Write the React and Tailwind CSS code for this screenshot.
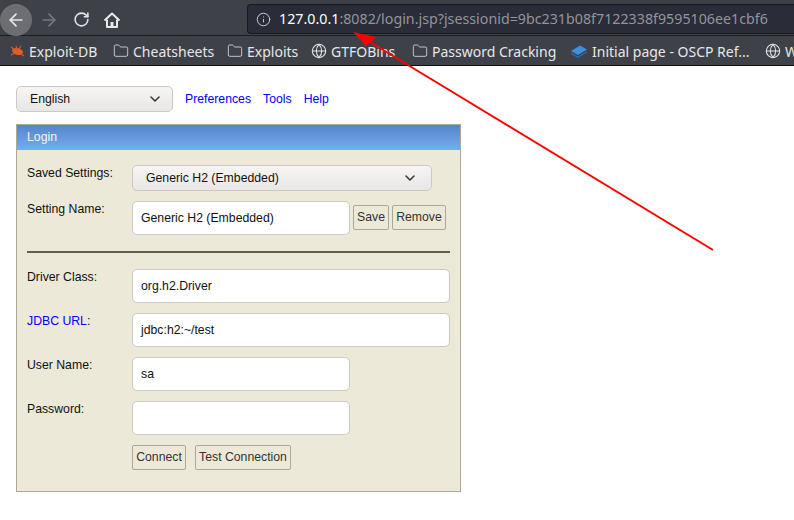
import React from "react";
import { ArrowLeft, ArrowRight, RotateCw, Info, ChevronDown, Folder, Globe } from "lucide-react";

const HomeIcon = () => (
  <svg width="18" height="18" viewBox="0 0 18 18" fill="none" stroke="#e8e9ec" strokeWidth="2" strokeLinejoin="round">
    <path d="M1.5 9.5 9 2.5l7.5 7" />
    <path d="M4 8.5v7.5h10V8.5" />
    <path d="M9 11v5" strokeWidth="3" />
  </svg>
);

const Bug = () => (
  <svg width="16" height="14" viewBox="0 0 16 14" className="shrink-0">
    <ellipse cx="8.5" cy="7.5" rx="5.5" ry="3.4" fill="#e0602c" transform="rotate(12 8.5 7.5)" />
    <path d="M2 3l4 3M2 11l4-2M7 2l1 3M12 2l-2 3M15 12l-3-2" stroke="#d9592a" strokeWidth="1.1" />
  </svg>
);

const BookIcon = () => (
  <svg width="18" height="14" viewBox="0 0 18 14" className="shrink-0">
    <path d="M1 7 10 1.5l7 4-9 5.5z" fill="#3d8fe0" />
    <path d="M1 8.5 8 12.5l9-5.500v1.500L8 14 1 10z" fill="#2a6cb8" />
  </svg>
);

const Bookmark = ({ icon, label, labelClass = "" }) => (
  <div className="flex items-center gap-[4px] shrink-0">
    {icon}
    <span className={labelClass}>{label}</span>
  </div>
);

const FolderIcon = () => <Folder size={16} strokeWidth={1.3} color="#d5d6da" className="shrink-0" />;
const GlobeIcon = () => <Globe size={16} strokeWidth={1.6} color="#e4e5e8" className="shrink-0" />;

const Select = ({ value, className = "" }) => (
  <div className={`flex items-center justify-between h-[26px] rounded-[5px] border border-[#cdc9c2] bg-gradient-to-b from-[#f6f5f4] to-[#e9e7e5] text-[12.25px] text-[#111] ${className}`}>
    <span>{value}</span>
    <ChevronDown size={16} strokeWidth={2.4} color="#3a3a3a" />
  </div>
);

const TextInput = ({ value, className = "" }) => (
  <div className={`flex items-center h-[34px] pl-2 rounded-[5px] border border-[#cdc9c2] bg-white text-[12.25px] text-[#111] ${className}`}>
    {value}
  </div>
);

const FormButton = ({ children, className = "" }) => (
  <div className={`flex items-center justify-center h-[25px] pb-[1px] rounded-[2px] border border-[#aca899] text-[12.25px] text-[#333] ${className}`}>
    {children}
  </div>
);

const Row = ({ label, labelClass = "text-[#111]", children, className = "" }) => (
  <div className={`flex ${className}`}>
    <div className={`w-[105px] shrink-0 text-[12.25px] leading-[14px] pt-[1px] ${labelClass}`}>{label}</div>
    {children}
  </div>
);

const App = () => {
  return (
    <div className="relative w-[794px] h-[520px] overflow-hidden bg-white font-['Liberation_Sans',sans-serif]">
      <div className="h-[66px] bg-[#3f4148] border-b border-[#0e0e10] font-['Noto_Sans',sans-serif] overflow-hidden">
        <div className="flex items-center h-[36px] border-b border-[#1d1e22]">
          <div className="flex items-center justify-center w-[32px] h-[32px] mt-[4px] rounded-full bg-[#6d6e73]">
            <ArrowLeft size={20} strokeWidth={2} color="#e8e8ea" />
          </div>
          <div className="flex items-center justify-center w-[33px] mt-[4px]">
            <ArrowRight size={20} strokeWidth={2} color="#75777c" />
          </div>
          <div className="flex items-center justify-center w-[32px] mt-[4px]">
            <RotateCw size={17} strokeWidth={2.2} color="#e4e5e8" />
          </div>
          <div className="flex items-center justify-center w-[30px] mt-[4px]">
            <HomeIcon />
          </div>
          <div className="flex items-center ml-[120px] flex-1 h-[30px] mt-[3px] pl-[8px] rounded-l-[4px] bg-[#2a2c37] border border-r-0 border-[#17181c] text-[14.25px] whitespace-nowrap overflow-hidden">
            <Info size={15} strokeWidth={1.6} color="#c9cacd" />
            <span className="ml-[8px] text-white">127.0.0.1</span>
            <span className="text-[#93959c]">:8082/login.jsp?jsessionid=9bc231b08f7122338f9595106ee1cbf6</span>
          </div>
        </div>
        <div className="flex items-center h-[29px] pl-[9px] pt-[1px] gap-[13px] text-[14px] text-[#e6e7ea] whitespace-nowrap">
          <Bookmark icon={<Bug />} label="Exploit-DB" labelClass="w-[71px]" />
          <Bookmark icon={<FolderIcon />} label="Cheatsheets" labelClass="w-[81px]" />
          <Bookmark icon={<FolderIcon />} label="Exploits" labelClass="w-[51px]" />
          <Bookmark icon={<GlobeIcon />} label="GTFOBins" labelClass="w-[68px]" />
          <Bookmark icon={<FolderIcon />} label="Password Cracking" labelClass="w-[125px]" />
          <Bookmark icon={<BookIcon />} label="Initial page - OSCP Ref..." labelClass="w-[160px]" />
          <Bookmark icon={<GlobeIcon />} label="W" />
        </div>
      </div>

      <div className="pl-[16px] pt-[20px]">
        <div className="flex items-center h-[26px]">
          <Select value="English" className="w-[157px] pl-[13px] pr-[9px]" />
          <div className="flex ml-[12px] gap-[12px] text-[12.25px] text-[#0000ff]">
            <span>Preferences</span>
            <span>Tools</span>
            <span>Help</span>
          </div>
        </div>

        <div className="mt-[12px] w-[445px] h-[368px] border border-[#aca899] bg-[#ece9d8]">
          <div className="flex items-center h-[25px] pl-[10px] pb-[1px] bg-gradient-to-b from-[#5585c8] to-[#74aef2] text-[12.25px] text-[#f2f5fa]">
            Login
          </div>
          <div className="pl-[10px] pt-[15px]">
            <Row label="Saved Settings:">
              <Select value="Generic H2 (Embedded)" className="w-[300px] pl-[13px] pr-[13px]" />
            </Row>
            <Row label="Setting Name:" className="mt-[10px]">
              <TextInput value="Generic H2 (Embedded)" className="w-[218px]" />
              <FormButton className="w-[36px] ml-[3px] mt-[4px]">Save</FormButton>
              <FormButton className="w-[54px] ml-[3px] mt-[4px]">Remove</FormButton>
            </Row>
            <div className="mt-[16px] w-[423px] h-[2px] bg-[#5f5d57]" />
            <Row label="Driver Class:" className="mt-[16px]">
              <TextInput value="org.h2.Driver" className="w-[318px]" />
            </Row>
            <Row label={<><span className="text-[#0000ff]">JDBC URL</span>:</>} className="mt-[10px]">
              <TextInput value="jdbc:h2:~/test" className="w-[318px]" />
            </Row>
            <Row label="User Name:" className="mt-[10px]">
              <TextInput value="sa" className="w-[218px]" />
            </Row>
            <Row label="Password:" className="mt-[10px]">
              <TextInput value="" className="w-[218px]" />
            </Row>
            <Row label="" className="mt-[10px]">
              <FormButton className="w-[54px]">Connect</FormButton>
              <FormButton className="w-[96px] ml-[9px]">Test Connection</FormButton>
            </Row>
          </div>
        </div>
      </div>

      {/* red annotation arrow drawn over the page */}
      <svg className="absolute left-0 top-0 pointer-events-none" width="794" height="520" viewBox="0 0 794 520" fill="none">
        <path d="M713 250 370 42" stroke="#ff0000" strokeWidth="2" />
        <path d="M353 32 376 37 366 46z" fill="#ff0000" />
      </svg>
    </div>
  );
};

export default App;
